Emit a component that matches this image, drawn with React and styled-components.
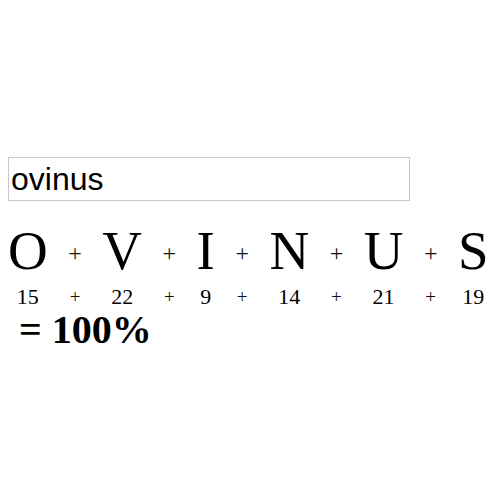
import React, { useState } from 'react';
import styled, { createGlobalStyle } from 'styled-components';

const GlobalStyle = createGlobalStyle`
  body {
    margin: 8px;
    background: #fff;
    color: #000;
    font-family: "Liberation Serif", "Times New Roman", serif;
  }
`;

const Page = styled.div`
  padding-top: 149px;
`;

const WordInput = styled.input`
  display: block;
  box-sizing: border-box;
  width: 402px;
  height: 44px;
  margin: 0 0 18px;
  padding: 1px 2px;
  border: 1px solid #c8c8c8;
  outline: none;
  font-family: "Liberation Sans", Arial, sans-serif;
  font-size: 32px;
  color: #000;
  background: #fff;
`;

const Sum = styled.div`
  display: inline-grid;
  grid-auto-flow: column;
  grid-template-rows: auto auto;
  column-gap: 20.5px;
  row-gap: 2px;
  align-items: center;
  justify-items: center;
`;

const Letter = styled.span`
  font-size: 55px;
  line-height: normal;
`;

const Value = styled.span`
  font-size: 22px;
  line-height: normal;
`;

const Plus = styled.span`
  font-size: ${({ $small }) => ($small ? '19px' : '24px')};
  margin-top: ${({ $small }) => ($small ? '0' : '6px')};
  line-height: normal;
  color: #111;
`;

const Total = styled.div`
  padding-left: 11px;
  font-size: 40px;
  font-weight: bold;
  line-height: 1;
`;

const score = (ch) => ch.toUpperCase().charCodeAt(0) - 64;

export default function App() {
  const [word, setWord] = useState('ovinus');
  const letters = word.replace(/[^a-z]/gi, '').toUpperCase().split('');
  const total = letters.reduce((s, c) => s + score(c), 0);

  return (
    <Page>
      <GlobalStyle />
      <WordInput value={word} onChange={(e) => setWord(e.target.value)} />
      <Sum>
        {letters.map((c, i) => (
          <React.Fragment key={i}>
            {i > 0 && <Plus>+</Plus>}
            {i > 0 && <Plus $small>+</Plus>}
            <Letter>{c}</Letter>
            <Value>{score(c)}</Value>
          </React.Fragment>
        ))}
      </Sum>
      <Total>= {total}%</Total>
    </Page>
  );
}
